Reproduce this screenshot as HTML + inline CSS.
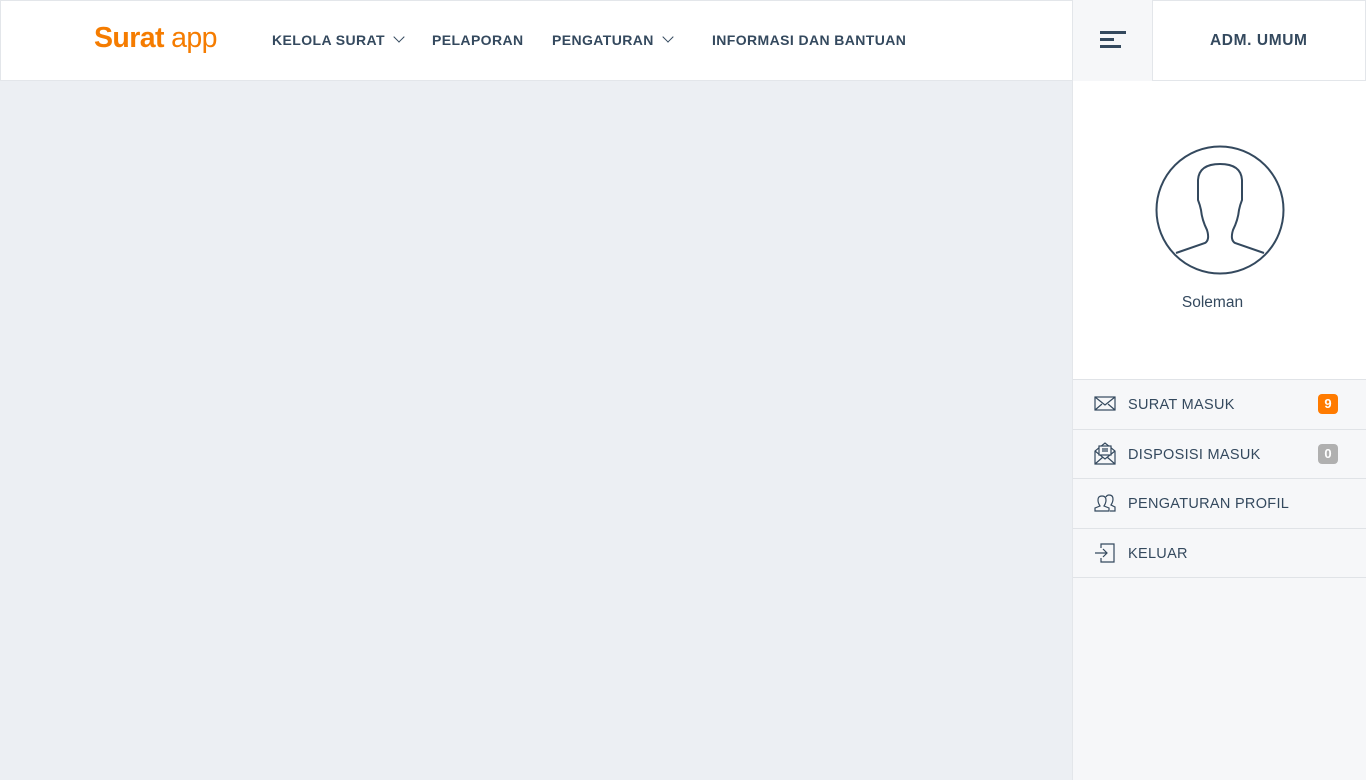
<!DOCTYPE html>
<html><head><style>
*{margin:0;padding:0;box-sizing:border-box}
body{width:1366px;height:780px;background:#eceff3;font-family:"Liberation Sans",sans-serif;position:relative;overflow:hidden;color:#34495e}
.top{position:absolute;left:0;top:0;width:1366px;height:81px;background:#fff;border:1px solid #e3e6ea}
.logo{position:absolute;left:93px;top:21px;font-size:28.5px;color:#f57c00;letter-spacing:-0.6px}
.logo b{font-weight:bold}
.nav{position:absolute;top:31px;font-size:14px;font-weight:bold;color:#34495e;letter-spacing:0.4px}
.chev{display:inline-block;width:8px;height:8px;border-right:1.5px solid #34495e;border-bottom:1.5px solid #34495e;transform:rotate(45deg);margin-left:10px;position:relative;top:-4px}
.ham{position:absolute;left:1072px;top:0;width:81px;height:81px;background:#f6f7f9;border-left:1px solid #e3e6ea;border-right:1px solid #e3e6ea}
.ham i{position:absolute;left:27px;height:3px;background:#34495e}
.adm{position:absolute;left:1210px;top:32px;font-size:15.5px;font-weight:bold;letter-spacing:0.6px}
.side{position:absolute;left:1072px;top:81px;width:294px;height:699px;background:#f6f7f9;border-left:1px solid #e3e6ea}
.prof{height:299px;background:#fff;border-bottom:1px solid #e0e3e7;position:relative}
.name{position:absolute;width:100%;text-align:center;top:213px;font-size:15.5px;left:-7px}
.item{height:49.5px;border-bottom:1px solid #e0e3e7;position:relative;font-size:14.5px;letter-spacing:0.3px}
.item span{position:absolute;left:55px;top:17px}
.item svg{position:absolute;left:21px;top:14px}
.badge{position:absolute;left:245px;top:14px;width:20px;height:20px;border-radius:4px;color:#fff;font-weight:bold;font-size:13px;text-align:center;line-height:20px;letter-spacing:0}
</style></head><body>
<div class="top">
<div class="logo"><b>Surat</b> app</div>
<div class="nav" style="left:271px">KELOLA SURAT<span class="chev"></span></div>
<div class="nav" style="left:431px">PELAPORAN</div>
<div class="nav" style="left:551px">PENGATURAN<span class="chev"></span></div>
<div class="nav" style="left:711px">INFORMASI DAN BANTUAN</div>
</div>
<div class="ham"><i style="top:31px;width:26px"></i><i style="top:38px;width:14px"></i><i style="top:45px;width:21px"></i></div>
<div class="adm">ADM. UMUM</div>
<div class="side">
<div class="prof">
<svg width="140" height="140" style="position:absolute;left:78px;top:59px" viewBox="1150 140 140 140" fill="none" stroke="#34495e" stroke-width="2">
<circle cx="1219" cy="210" r="63.5"/>
<path d="M1175 253 L1204 243 Q1209 240 1206 230 Q1201 220 1200 210 Q1199 205 1197 200 L1197 180 Q1198 164 1219 164 Q1240 164 1241 180 L1241 200 Q1239 205 1238 210 Q1237 220 1232 230 Q1229 240 1234 243 L1263 253"/>
</svg>
<div class="name">Soleman</div>
</div>
<div class="item"><svg width="22" height="18" viewBox="0 0 22 18" fill="none" stroke="#34495e" stroke-width="1.2"><rect x="1" y="3" width="20" height="13"/><path d="M1 3l10 8 10-8M1 16l7-6M21 16l-7-6"/></svg><span>SURAT MASUK</span><div class="badge" style="background:#ff7b00">9</div></div>
<div class="item"><svg width="22" height="24" viewBox="0 0 22 24" fill="none" stroke="#34495e" stroke-width="1.2" style="top:11px"><path d="M1 10v13h20V10L11 2z"/><path d="M1 10l10 8 10-8M1 23l8-7M21 23l-8-7"/><rect x="5" y="5" width="12" height="9" fill="#f6f7f9"/><path d="M8 8h6M8 10h6"/></svg><span>DISPOSISI MASUK</span><div class="badge" style="background:#b0b0b0">0</div></div>
<div class="item"><svg width="22" height="20" viewBox="0 0 22 20" fill="none" stroke="#34495e" stroke-width="1.2"><path d="M1 18v-3l5-2q-2-3-2-6 0-4 4-4t4 4q0 3-2 6l5 2v3z"/><path d="M12 4q1-2 3-2 4 0 4 4 0 3-2 6l4 2v4h-5"/></svg><span>PENGATURAN PROFIL</span></div>
<div class="item"><svg width="22" height="20" viewBox="0 0 22 20" fill="none" stroke="#34495e" stroke-width="1.2"><path d="M7 5V1h13v18H7v-4"/><path d="M1 10h12M9 6l4 4-4 4"/></svg><span>KELUAR</span></div>
</div>
</body></html>
